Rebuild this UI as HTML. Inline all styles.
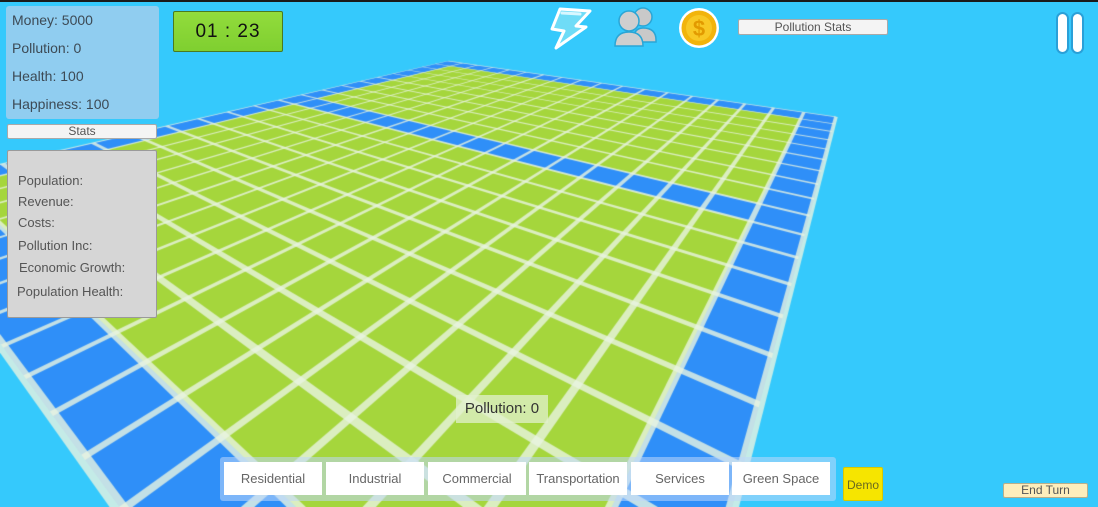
<!DOCTYPE html>
<html><head><meta charset="utf-8">
<style>
*{margin:0;padding:0;box-sizing:border-box}
body{width:1098px;height:507px;overflow:hidden;background:#35c9fc;font-family:"Liberation Sans",sans-serif;position:relative}
canvas{position:absolute;left:0;top:0}
.abs{position:absolute}
#topbar{left:0;top:0;width:1098px;height:2px;background:#1a1a1a}
#stats{left:6px;top:6px;width:153px;height:113px;background:#90cdf0;border-radius:3px}
#stats div{position:absolute;left:6px;font-size:14px;color:#3d4a55}
.btn{background:#f4f4f4;border:1px solid #a9a9a9;border-radius:2px;font-size:12px;color:#555;text-align:center;line-height:13px}
#gray{left:7px;top:150px;width:150px;height:168px;background:#d6d6d6;border:1px solid #9a9a9a;border-radius:2px}
#gray div{position:absolute;font-size:13px;color:#555}
#timer{left:173px;top:11px;width:110px;height:41px;background:linear-gradient(#92dc3c,#7fcf30);border:1px solid #4a7a20;border-radius:2px;font-size:19px;text-align:center;line-height:39px;color:#111;letter-spacing:1px}
#poll{left:456px;top:395px;width:92px;height:28px;background:rgba(225,240,205,.75);font-size:15px;color:#333;text-align:center;line-height:28px}
#tool{left:220px;top:457px;width:616px;height:44px;background:rgba(190,215,250,.55);border-radius:3px}
.tb{position:absolute;top:5px;height:33px;width:98px;background:#fff;font-size:13px;color:#666;text-align:center;line-height:33px}
#demo{left:843px;top:467px;width:40px;height:34px;background:#f6e500;border:1px solid #d8c800;border-radius:2px;font-size:12px;color:#6a6a20;text-align:center;line-height:34px}
#end{left:1003px;top:483px;width:85px;height:15px;background:#fdeebc;border:1px solid #b9ae8a;border-radius:2px;font-size:12px;color:#555;text-align:center;line-height:13px}
.bar{position:absolute;top:12px;width:13px;height:42px;background:#fff;border:2px solid #2aa0d8;border-radius:7px}
</style></head><body>
<canvas id="c" width="1098" height="507"></canvas>
<div class="abs" id="topbar"></div>
<div class="abs" id="stats">
<div style="top:6px">Money: 5000</div>
<div style="top:34px">Pollution: 0</div>
<div style="top:62px">Health: 100</div>
<div style="top:90px">Happiness: 100</div>
</div>
<div class="abs btn" style="left:7px;top:124px;width:150px;height:15px">Stats</div>
<div class="abs" id="gray">
<div style="left:10px;top:22px">Population:</div>
<div style="left:10px;top:43px">Revenue:</div>
<div style="left:10px;top:64px">Costs:</div>
<div style="left:10px;top:87px">Pollution Inc:</div>
<div style="left:11px;top:109px">Economic Growth:</div>
<div style="left:9px;top:133px">Population Health:</div>
</div>
<div class="abs" id="timer">01 : 23</div>
<svg class="abs" style="left:546px;top:4px" width="48" height="46" viewBox="0 0 48 46">
<path d="M14 5 L44 7 L30 22 L40 23 L10 44 L18 27 L6 25 Z" fill="#6fdcf7" stroke="#fff" stroke-width="3" stroke-linejoin="round"/>
<path d="M16 9 L34 10" stroke="#d8f7ff" stroke-width="3" stroke-linecap="round"/>
</svg>
<svg class="abs" style="left:612px;top:4px" width="48" height="44" viewBox="0 0 48 44">
<circle cx="31" cy="13" r="9" fill="#c9c9c9" stroke="#2aa6d6" stroke-width="1.5"/>
<path d="M21 38 Q21 24 31 24 Q44 24 44 36 L44 38 Z" fill="#c9c9c9" stroke="#2aa6d6" stroke-width="1.5"/>
<circle cx="17" cy="17" r="10" fill="#cfcfcf" stroke="#2aa6d6" stroke-width="1.5"/>
<path d="M3 42 Q3 28 17 28 Q31 28 31 42 Z" fill="#cfcfcf" stroke="#2aa6d6" stroke-width="1.5"/>
</svg>
<svg class="abs" style="left:677px;top:6px" width="44" height="44" viewBox="0 0 44 44">
<circle cx="22" cy="22" r="20" fill="#fff"/>
<circle cx="22" cy="22" r="17.5" fill="#f2b40c"/>
<circle cx="22" cy="22" r="13" fill="#f8c824"/>
<text x="22" y="30" font-size="22" font-weight="bold" text-anchor="middle" fill="#e29a00" font-family="Liberation Sans, sans-serif">$</text>
</svg>
<div class="abs btn" style="left:738px;top:19px;width:150px;height:16px;line-height:14px;font-size:12px">Pollution Stats</div>
<div class="bar" style="left:1056px"></div>
<div class="bar" style="left:1071px"></div>
<div class="abs" id="poll">Pollution: 0</div>
<div class="abs" id="tool">
<div class="tb" style="left:4px">Residential</div>
<div class="tb" style="left:106px">Industrial</div>
<div class="tb" style="left:208px">Commercial</div>
<div class="tb" style="left:309px">Transportation</div>
<div class="tb" style="left:411px">Services</div>
<div class="tb" style="left:512px">Green Space</div>
</div>
<div class="abs" id="demo">Demo</div>
<div class="abs" id="end">End Turn</div>
<script>
(function(){
var c=document.getElementById('c').getContext('2d');
var N=18,M=20,a=-0.347/N,b=-0.566/M;
function P(u,v){var d=a*u+b*v+1;return[(-282*a*u+877*b*v+448)/d,(-44*a*u-38*b*v+61)/d];}
function quad(u0,v0,u1,v1,col){var p=[P(u0,v0),P(u1,v0),P(u1,v1),P(u0,v1)];c.beginPath();c.moveTo(p[0][0],p[0][1]);for(var i=1;i<4;i++)c.lineTo(p[i][0],p[i][1]);c.closePath();c.fillStyle=col;c.fill();}
quad(0,0,N,M,'#2f8ff8');
quad(1,1,N-1,9,'#a5d63c');
quad(1,10,N-1,M-1,'#a5d63c');
var w=0.055,lc='rgba(232,244,225,0.8)';
for(var i=0;i<=N;i++)quad(i-w,0,i+w,M,lc);
for(var i=0;i<=M;i++)quad(0,i-w,N,i+w,lc);
})();
</script>
</body></html>
